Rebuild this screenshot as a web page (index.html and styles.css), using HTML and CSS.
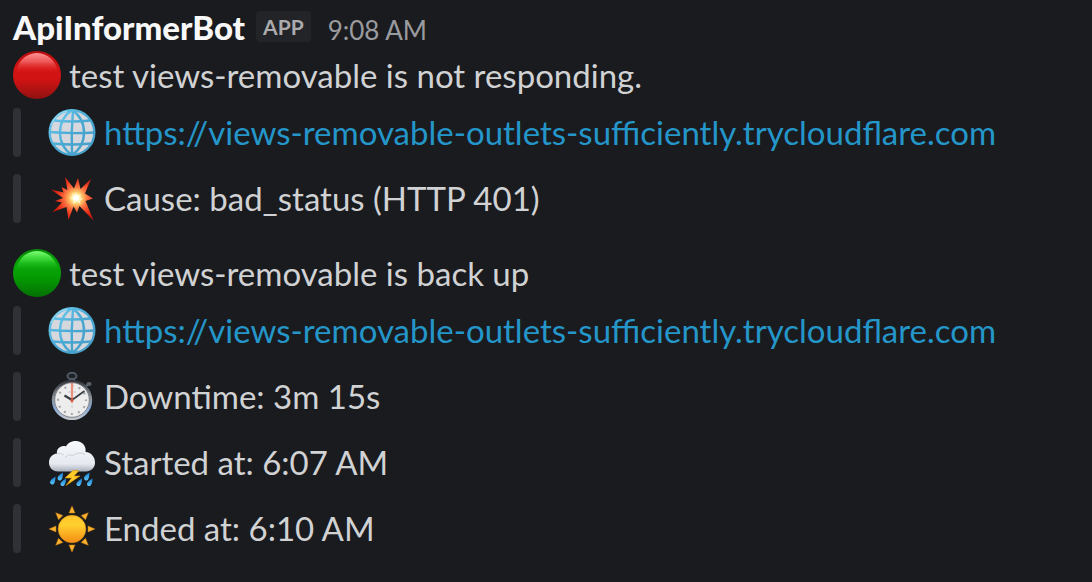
FILE: index.html
```html
<!DOCTYPE html>
<html lang="en">
<head>
    <meta charset="UTF-8">
    <meta name="viewport" content="width=device-width, initial-scale=1.0">
    <title>ApiInformerBot</title>
    <link rel="stylesheet" href="styles.css">
</head>
<body>

    <!-- shared icons -->
    <svg class="defs" width="0" height="0" aria-hidden="true">
        <defs>
            <linearGradient id="redFill" x1="0" y1="0" x2="0" y2="1">
                <stop offset="0" stop-color="#b80d0d"/>
                <stop offset="0.35" stop-color="#d51414"/>
                <stop offset="0.6" stop-color="#d01313"/>
                <stop offset="1" stop-color="#8f1111"/>
            </linearGradient>
            <linearGradient id="greenFill" x1="0" y1="0" x2="0" y2="1">
                <stop offset="0" stop-color="#0a8a0a"/>
                <stop offset="0.35" stop-color="#08a608"/>
                <stop offset="0.6" stop-color="#059a03"/>
                <stop offset="1" stop-color="#047004"/>
            </linearGradient>
            <linearGradient id="redShine" x1="0" y1="0" x2="0" y2="1">
                <stop offset="0" stop-color="#ff9494"/>
                <stop offset="0.2" stop-color="#f86a6a" stop-opacity="0.8"/>
                <stop offset="0.45" stop-color="#e02020" stop-opacity="0"/>
            </linearGradient>
            <linearGradient id="greenShine" x1="0" y1="0" x2="0" y2="1">
                <stop offset="0" stop-color="#7cff74"/>
                <stop offset="0.2" stop-color="#40e03c" stop-opacity="0.8"/>
                <stop offset="0.45" stop-color="#10b010" stop-opacity="0"/>
            </linearGradient>
            <linearGradient id="globeLine" x1="0" y1="0" x2="1" y2="1">
                <stop offset="0" stop-color="#6ccbee"/>
                <stop offset="0.55" stop-color="#45a6d2"/>
                <stop offset="1" stop-color="#4a9fc8"/>
            </linearGradient>
            <radialGradient id="boomFill" gradientUnits="userSpaceOnUse" cx="28" cy="24" r="23">
                <stop offset="0" stop-color="#ffffff"/>
                <stop offset="0.15" stop-color="#fff2a0"/>
                <stop offset="0.32" stop-color="#ffb45c"/>
                <stop offset="0.5" stop-color="#fb7040"/>
                <stop offset="0.75" stop-color="#ec3a1e"/>
                <stop offset="1" stop-color="#cc1a0d"/>
            </radialGradient>
            <linearGradient id="rim" x1="0" y1="0" x2="0" y2="1">
                <stop offset="0" stop-color="#33363e"/>
                <stop offset="0.45" stop-color="#8b929b"/>
                <stop offset="0.75" stop-color="#87a9d8"/>
                <stop offset="1" stop-color="#c3c8cf"/>
            </linearGradient>
            <linearGradient id="cloudFill" x1="0" y1="0" x2="0" y2="1">
                <stop offset="0" stop-color="#f6f9fd"/>
                <stop offset="0.75" stop-color="#e6e9ef"/>
                <stop offset="1" stop-color="#a9b1bd"/>
            </linearGradient>
            <linearGradient id="drop" x1="0" y1="0" x2="0" y2="1">
                <stop offset="0" stop-color="#157ccf"/>
                <stop offset="1" stop-color="#5ec6fa"/>
            </linearGradient>
            <linearGradient id="sunFill" x1="0" y1="0" x2="0" y2="1">
                <stop offset="0" stop-color="#ffc42b"/>
                <stop offset="0.35" stop-color="#ffd02f"/>
                <stop offset="1" stop-color="#f58c13"/>
            </linearGradient>

            <symbol id="globe" viewBox="0 0 48 48">
                <circle cx="24" cy="24.5" r="22.5" fill="#d6d8dd"/>
                <g fill="none" stroke="url(#globeLine)" stroke-width="2.4">
                    <circle cx="24" cy="24.5" r="22.3"/>
                    <path d="M24 2Q12 10 12 24.500Q12 39 24 47M24 2Q36 10 36 24.500Q36 39 24 47"/>
                    <path d="M25 2Q23 24 24 47M1.500 24Q24 26 46.500 24.500M6 12.500Q24 14.500 42 12.500M5 35.500Q24 37.500 43 35.500"/>
                </g>
                <path d="M3 17Q8 5 19 3" fill="none" stroke="#a0dff4" stroke-width="1"/>
            </symbol>

            <symbol id="boom" viewBox="0 0 48 48">
                <path fill="url(#boomFill)" d="M17 3L26 14.500L30 4L32.500 15L43 5L37 19.500L45 24.500L37.500 27L45.500 46.500L31.500 32L29 38.500L25.500 32.500L20.500 46L18.500 33L4.500 38L14 28.500L7 27L15 24L3 15.500L15.500 18.500L13.500 13L19.500 16Z"/>
                <path fill="#fff8ca" d="M28 18L29.500 21L33 20L32 23.500L35 25L32 26.500L32.500 30L28.500 27.500L25 30L25 26L22 24L25 22L24 19L27 20.500Z" opacity="0.8"/>
                <circle cx="28" cy="24" r="2.800" fill="#fff"/>
            </symbol>

            <symbol id="stopwatch" viewBox="0 0 48 48">
                <ellipse cx="24" cy="4" rx="4.500" ry="3.200" fill="#1f2226" stroke="#505a64" stroke-width="2"/>
                <path d="M21 6.500H27V10H21Z" fill="#59616a"/>
                <path d="M37 15L41 11.500" stroke="#65696f" stroke-width="2"/>
                <ellipse cx="41" cy="12" rx="2.600" ry="2" fill="#59616b"/>
                <circle cx="24" cy="28" r="18.900" fill="#ededee" stroke="url(#rim)" stroke-width="2.600"/>
                <circle cx="24" cy="28" r="17.300" fill="none" stroke="#55585d" stroke-width="0.700"/>
                <circle cx="24" cy="28" r="14" fill="none" stroke="#a4a6a9" stroke-width="2.200" stroke-dasharray="2 5.330" stroke-dashoffset="1"/>
                <path d="M20 20H28M24 33V36" stroke="#c7c8cb" stroke-width="1"/>
                <path d="M24 11V31" stroke="#e8927b" stroke-width="2.200"/>
                <path d="M16.500 23.500L24 28" stroke="#353d42" stroke-width="2.200"/>
                <path d="M24 28L36.500 19" stroke="#353d42" stroke-width="1.600"/>
                <circle cx="24" cy="28" r="1.600" fill="#d4553c"/>
            </symbol>

            <symbol id="storm" viewBox="0 0 48 48">
                <path fill="url(#cloudFill)" d="M10 33.500C4 33.500 1 29 1 24.500C1 19.500 4.500 16 9 15.500C8 11 13 6.500 18 8.500C20 4.500 24 3 28 3C34 3 38.500 8 37.500 14C43.500 14.500 47 19 47 24.500C47 30 43 33.500 38 33.500Z"/>
                <path d="M9 15.500Q13 14.500 16 17M17 19.500Q20 15.500 25 17.500Q31 13 37 16.500" fill="none" stroke="#cdd3dc" stroke-width="1"/>
                <path fill="#ffcb28" stroke="#d7920d" stroke-width="0.600" d="M25 32.500L17 40H23.500L18 47.500L32 38H26L31 32.500Z"/>
                <g fill="url(#drop)">
                    <path d="M7.500 38.500Q1.800 42 2 44.500Q2.500 47 5 46.500Q7.500 45 7.500 38.500Z"/>
                    <path d="M15 34.500Q9 38 9.500 40.500Q10 43 12.500 42.500Q15 41 15 34.500Z"/>
                    <path d="M18 40.500Q12 44 12.500 46.500Q13 48.500 15.500 48Q18 46 18 40.500Z"/>
                    <path d="M41.500 34.500Q35.500 38 36 40.500Q36.500 43 39 42.500Q41.500 41 41.500 34.500Z"/>
                    <path d="M34 40.500Q28 44 28.500 46.500Q29 48.500 31.500 48Q34 46 34 40.500Z"/>
                    <path d="M44.500 40.500Q38.500 44 39 46.500Q39.500 48.500 42 48Q44.500 46 44.500 40.500Z"/>
                </g>
            </symbol>

            <symbol id="sun" viewBox="0 0 48 48">
                <circle cx="24" cy="25" r="13.800" fill="url(#sunFill)" stroke="#e29716" stroke-width="0.500"/>
                <g fill="#fbb32c" stroke="#c97b14" stroke-width="0.500">
                    <path id="ray" d="M24 2L27 9H21Z"/>
                    <use href="#ray" transform="rotate(45 24 25)"/>
                    <use href="#ray" transform="rotate(90 24 25)"/>
                    <use href="#ray" transform="rotate(135 24 25)"/>
                    <use href="#ray" transform="rotate(180 24 25)"/>
                    <use href="#ray" transform="rotate(225 24 25)"/>
                    <use href="#ray" transform="rotate(270 24 25)"/>
                    <use href="#ray" transform="rotate(315 24 25)"/>
                </g>
            </symbol>
        </defs>
    </svg>

    <main class="message">
        <header class="message-header">
            <strong class="sender">ApiInformerBot</strong>
            <span class="badge">APP</span>
            <time class="time">9:08 AM</time>
        </header>

        <section class="alert">
            <p class="status">
                <svg class="emoji" viewBox="0 0 48 48" aria-hidden="true">
                    <circle cx="24" cy="24" r="24" fill="url(#redFill)"/>
                    <ellipse cx="24" cy="24" rx="21" ry="22" fill="url(#redShine)"/>
                </svg>
                <span>test views-removable is not responding.</span>
            </p>
            <blockquote class="quote">
                <svg class="emoji" aria-hidden="true"><use href="#globe"/></svg>
                <a href="https://views-removable-outlets-sufficiently.trycloudflare.com">https://views-removable-outlets-sufficiently.trycloudflare.com</a>
            </blockquote>
            <blockquote class="quote">
                <svg class="emoji" aria-hidden="true"><use href="#boom"/></svg>
                <span>Cause: bad_status (HTTP 401)</span>
            </blockquote>
        </section>

        <section class="alert">
            <p class="status">
                <svg class="emoji" viewBox="0 0 48 48" aria-hidden="true">
                    <circle cx="24" cy="24" r="24" fill="url(#greenFill)"/>
                    <ellipse cx="24" cy="24" rx="21" ry="22" fill="url(#greenShine)"/>
                </svg>
                <span>test views-removable is back up</span>
            </p>
            <blockquote class="quote">
                <svg class="emoji" aria-hidden="true"><use href="#globe"/></svg>
                <a href="https://views-removable-outlets-sufficiently.trycloudflare.com">https://views-removable-outlets-sufficiently.trycloudflare.com</a>
            </blockquote>
            <blockquote class="quote">
                <svg class="emoji" aria-hidden="true"><use href="#stopwatch"/></svg>
                <span>Downtime: 3m 15s</span>
            </blockquote>
            <blockquote class="quote">
                <svg class="emoji" aria-hidden="true"><use href="#storm"/></svg>
                <span>Started at: 6:07 AM</span>
            </blockquote>
            <blockquote class="quote">
                <svg class="emoji" aria-hidden="true"><use href="#sun"/></svg>
                <span>Ended at: 6:10 AM</span>
            </blockquote>
        </section>
    </main>

</body>
</html>
```
FILE: styles.css
```css
body {
    margin: 0;
    background-color: #1a1b1f;
    color: #d1d2d3;
    font-family: Lato, sans-serif;
    font-size: 33px;
    line-height: 48px;
}

.defs {
    position: absolute;
}

.message {
    padding: 3px 12px 28px 13px;
}

.message-header {
    display: flex;
    align-items: flex-start;
    height: 48px;
}

.sender {
    color: #f8f8f8;
    font-weight: 900;
}

.badge {
    margin: 8px 0 0 11px;
    padding: 0 7px;
    border-radius: 4px;
    background-color: #232428;
    color: #ababad;
    font-size: 21px;
    font-weight: 700;
    line-height: 31px;
}

.time {
    margin-left: 17px;
    color: #9a9b9e;
    font-size: 26px;
    line-height: 54px;
}

.alert + .alert {
    margin-top: 26px;
}

.status {
    display: flex;
    align-items: center;
    gap: 8px;
    margin: 0 0 9px;
}

.quote {
    display: flex;
    align-items: flex-start;
    gap: 8px;
    position: relative;
    min-height: 49px;
    margin: 0 0 17px;
    padding-left: 35px;
}

.quote:last-child {
    margin-bottom: 0;
}

/* rounded bar on the left of a quote */
.quote::before {
    content: "";
    position: absolute;
    left: 0;
    top: 0;
    bottom: 0;
    width: 8px;
    border-radius: 4px;
    background-color: #303136;
}

.emoji {
    flex: none;
    width: 48px;
    height: 48px;
    overflow: visible;
}

a {
    color: #2496c9;
    text-decoration: none;
}

a:hover {
    text-decoration: underline;
}
```
